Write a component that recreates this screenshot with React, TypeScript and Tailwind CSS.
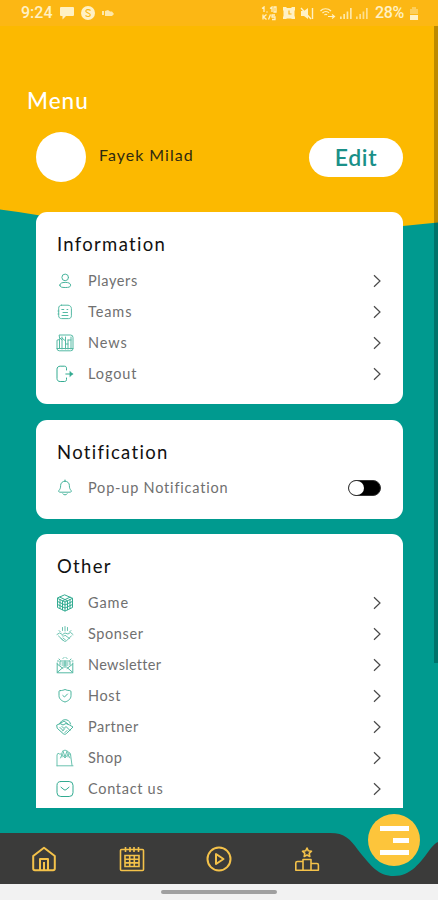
import React from 'react';

interface MenuItem {
    label: string;
    icon: React.ReactNode;
    tracking?: string;
}

interface IconProps {
    children: React.ReactNode;
    opacity?: string;
}

// Thin line icon used in the menu rows (18x18 grid)
const LineIcon: React.FC<IconProps> = ({ children, opacity = 'opacity-80' }) => (
    <svg
        viewBox="0 0 18 18"
        className={`w-[18px] h-[18px] shrink-0 text-[#1da386] ${opacity}`}
        fill="none"
        stroke="currentColor"
        strokeWidth="1"
        strokeLinecap="round"
        strokeLinejoin="round"
    >
        {children}
    </svg>
);

const informationItems: MenuItem[] = [
    {
        label: 'Players',
        tracking: 'tracking-[0.6px]',
        icon: (
            <LineIcon>
                <circle cx="9.2" cy="5.4" r="3.3" />
                <path d="M3.800 13.2c0-2 2.2-2.800 5.400-2.800s5.400.8 5.400 2.800-2.200 2.300-5.400 2.300-5.400-.3-5.400-2.300Z" />
            </LineIcon>
        ),
    },
    {
        label: 'Teams',
        icon: (
            <LineIcon opacity="opacity-75">
                <path d="M5.500 2.200h6.500c1.900 0 3.400 1.500 3.400 3.400v7.200c0 1.700-1 2.800-2.800 2.800h-7c-1.800 0-2.900-1-2.900-2.800V5.200c0-1.800 1-3 2.800-3Z" />
                <path d="M5.800 6.500h2M7 9.500h4.500M6 12.500h6M11 6.500h.8M2.800 8H2M2.800 11H2" />
            </LineIcon>
        ),
    },
    {
        label: 'News',
        icon: (
            <LineIcon opacity="opacity-75">
                <path d="M3.500 1h11a2.500 2.500 0 0 1 2.500 2.500v11a2.300 2.300 0 0 1-2.500 2.300H3.200A2.300 2.300 0 0 1 1 14.500V6.200l2.500-.7Z" />
                <path d="M3.500 5.500v9M6 3v12M6 4l3.500 3M9.500 3v12M12 6v9M9.500 10H12M12 6h3M15 3v12M3.500 3.500 6 6M1 14.500h16" />
            </LineIcon>
        ),
    },
    {
        label: 'Logout',
        icon: (
            <LineIcon opacity="opacity-90">
                <path d="M10.500 5V3.200c0-1.300-.8-2-2-2H4.200C2.200 1.200 1 2.400 1 4.200v9.300c0 1.900 1.200 3 3.200 3h4.300c1.200 0 2-.7 2-2V13" />
                <path d="M9.800 9h7" />
                <path d="M14 6.500 16.700 9 14 11.500Z" fill="currentColor" strokeWidth="0.500" />
            </LineIcon>
        ),
    },
];

const otherItems: MenuItem[] = [
    {
        label: 'Game',
        icon: (
            <LineIcon opacity="opacity-90">
                <path d="M9 1 16.500 4.300v9.200L9 17l-7.500-3.500V4.300Z" />
                <path d="M1.500 4.300 9 8l7.500-3.700M9 8v9M4 3.200l7.500 3.600v9M14 3.200 6.500 6.800v9M1.500 7.400 9 11l7.500-3.600M1.500 10.500 9 14l7.500-3.500M4 5.500v9M14 5.500v9" />
            </LineIcon>
        ),
    },
    {
        label: 'Sponser',
        tracking: 'tracking-[0.6px]',
        icon: (
            <LineIcon opacity="opacity-65">
                <path d="M1 9.500 3.500 8l3 1.500L9 8l3 1 2.500-1.500L17 9.500M2.500 11l5.500 5c.8.700 1.800.5 2.500-.2l5-5M6 10.500c1 1 2 .8 3-.3l4.500 3.300M7 13l2.500 2M5 13.500l2 2" />
                <path d="M9 1.500V6M6.500 2.500v3M11.500 2.500v3M3 5.500 4.500 7M15 5.500 13.500 7" />
            </LineIcon>
        ),
    },
    {
        label: 'Newsletter',
        tracking: 'tracking-[0.3px]',
        icon: (
            <LineIcon opacity="opacity-75">
                <path d="M1.200 7v9.800h15.600V7M1.200 8 7 12.500M16.800 8 11 12.500M1.200 16.500 7.500 11h3l6.300 5.500M4 9V5h10v4M6 7h6M6 9h6M9 5v5" />
                <path d="M3 3 4 4.200M15 3l-1 1.200M7 2.500l1-1M11 2.500l-1-1M1.500 5h1M16 5h1" />
            </LineIcon>
        ),
    },
    {
        label: 'Host',
        tracking: 'tracking-[0.6px]',
        icon: (
            <LineIcon>
                <path d="M4.200 3.600c2 0 3.400-.5 4.800-1.100 1.400.6 2.800 1.100 4.800 1.100.8 0 1.200.5 1.200 1.200v3.800c0 3.300-2.600 5.400-6 6.400-3.400-1-6-3.100-6-6.400V4.800c0-.7.4-1.200 1.200-1.200Z" />
                <path d="m6.800 8.500 1.700 1.500 3-3" />
            </LineIcon>
        ),
    },
    {
        label: 'Partner',
        tracking: 'tracking-[0.5px]',
        icon: (
            <LineIcon>
                <path d="M3.500 6C5 2.500 8 1 11 2c2 .7 3.200 2.200 3.500 4M1 7l3-1.500 3 1.500 3-1.500 3.500 1.500 3.500 2-3 3-3.500 3.500c-1 1-2.500 1-3.500 0L1.500 10.500Z" />
                <path d="m6 8.500 2 2 2-2 4 4M5 5l3-2 4 3M6.500 13l2-2M9 14.500l2-2M4 9.500l3 3" />
            </LineIcon>
        ),
    },
    {
        label: 'Shop',
        tracking: 'tracking-[0.6px]',
        icon: (
            <LineIcon opacity="opacity-65">
                <path d="M6 5H3.500L2 4.200 1 6v10.800M6 8V4.500C6 2.600 7.200 1.200 9 1.200s3 1.400 3 3.300V8M12 5h2.500L16 16.500M7 2l2 6 2-6M4.500 9 6 5.500 9 9l3-3.500L14 9M12 3c1.500 0 2.500 1 2.500 3" />
                <path d="M1 16.800h16" />
            </LineIcon>
        ),
    },
    {
        label: 'Contact us',
        tracking: 'tracking-[0.7px]',
        icon: (
            <LineIcon opacity="opacity-90">
                <rect x="1" y="1.500" width="16" height="15" rx="3.800" />
                <path d="m5 7.200 3 2.500c.7.500 1.300.5 2 0l3-2.500" />
            </LineIcon>
        ),
    },
];

const StatusBar: React.FC = () => (
    <div className="h-[26px] bg-[#fcb714] flex items-center justify-between pl-[21px] pr-[20px] text-[#fff1c4] font-['Roboto',sans-serif] font-medium text-[16px]">
        <div className="flex items-center">
            <span className="w-[32px]">9:24</span>
            <svg viewBox="0 0 14 14" className="w-[14px] h-[14px] ml-[7px]" fill="currentColor">
                <path d="M1 1h12a1 1 0 0 1 1 1v7a1 1 0 0 1-1 1H6l-3.500 3.500V10H1a1 1 0 0 1-1-1V2a1 1 0 0 1 1-1Z" />
            </svg>
            <svg viewBox="0 0 14 14" className="w-[14px] h-[14px] ml-[7px]">
                <circle cx="7" cy="7" r="7" fill="currentColor" />
                <path d="M9.500 4.500C8 3 4.500 3.500 4.800 5.300S9.500 7 9.300 8.900 6 11 4.500 9.500" fill="none" stroke="#fcb714" strokeWidth="1.100" />
            </svg>
            <svg viewBox="0 0 12 8" className="w-[12px] h-[8px] ml-[7px]" fill="currentColor" opacity="0.85">
                <path d="M0 2h2v4H0ZM3 2l3-1 2 1.500h2L12 5l-2 2H3Z" />
            </svg>
        </div>
        <div className="flex items-center">
            <svg viewBox="0 0 16 15" className="w-[16px] h-[15px]" fill="none" stroke="currentColor" strokeWidth="1.300">
                <path d="M1 2.500 3 1v5M5.500 6h1M9 2.500 11 1v5M13 1h2v5h-2ZM2 8.500v5M5.500 8.500 2.500 11l3 2.500M9.500 8.500l-2 5M14 9h-3v2h3v2.500h-3" />
            </svg>
            <svg viewBox="0 0 12 13" className="w-[12px] h-[13px] ml-[6px]">
                <path d="M0 0h3l1 1h4l1-1h3v3l-.5 1v5l.5 1v2h-3l-1-.5H4l-1 .5H0v-2l.5-1V4L0 3Z" fill="currentColor" />
                <path d="M6 3.500V7h2.500" fill="none" stroke="#fcb714" strokeWidth="1.200" />
            </svg>
            <svg viewBox="0 0 14 13" className="w-[14px] h-[13px] ml-[5px]" fill="currentColor">
                <path d="M1 4h3l4-3v11L4 9H1Z" />
                <path d="m1 1 10 11M12.500 1v11" stroke="currentColor" strokeWidth="1.400" />
            </svg>
            <svg viewBox="0 0 16 12" className="w-[16px] h-[12px] ml-[6px]" fill="none" stroke="currentColor" strokeWidth="1.200">
                <path d="M.5 4C3 1 8 1 11 4M2.500 6C4.500 4 7.500 4 9 6M4.500 8C5.500 7 6.500 7 7 8M8 9.500h6M12 7.500l2.500 2-2.500 2" />
            </svg>
            <svg viewBox="0 0 12 11" className="w-[12px] h-[11px] ml-[4px]" fill="currentColor" opacity="0.85">
                <path d="M0 8.500h1.700V11H0ZM3.300 6H5v5H3.300ZM6.600 3.500h1.700V11H6.600ZM10 0h1.700v11H10Z" />
            </svg>
            <svg viewBox="0 0 12 11" className="w-[12px] h-[11px] ml-[4px]" fill="currentColor" opacity="0.7">
                <path d="M0 8.500h1.700V11H0ZM3.300 6H5v5H3.300ZM6.600 3.500h1.700V11H6.600ZM10 0h1.700v11H10Z" />
            </svg>
            <span className="ml-[7px] w-[30px] tracking-[-0.400px]">28%</span>
            <svg viewBox="0 0 8 13" className="w-[8px] h-[13px] ml-[5px]" fill="currentColor">
                <path d="M2 0h4v2h2v5H0V2h2Z" opacity="0.4" />
                <path d="M0 8h8v5H0Z" />
            </svg>
        </div>
    </div>
);

const Chevron: React.FC = () => (
    <svg viewBox="0 0 8 14" className="w-[8px] h-[14px]" fill="none" stroke="#4a4a4a" strokeWidth="1.200">
        <path d="M1 1.200 7 7l-6 5.800" />
    </svg>
);

const Card: React.FC<{ title: string; className?: string; children: React.ReactNode }> = ({ title, className = '', children }) => (
    <section className={`bg-white rounded-[11px] pl-[20px] pr-[22px] pt-[18px] pb-[15px] ${className}`}>
        <h2 className="h-7 leading-7 mb-[7px] pl-[1px] text-[18.5px] tracking-[1.3px] text-[#111]">{title}</h2>
        {children}
    </section>
);

const Row: React.FC<{ item: MenuItem; children?: React.ReactNode }> = ({ item, children }) => (
    <div className="h-[31px] flex items-center">
        {item.icon}
        <span className={`ml-[14px] flex-1 text-[14.500px] text-[#707070] ${item.tracking ?? 'tracking-[0.9px]'}`}>{item.label}</span>
        {children ?? <Chevron />}
    </div>
);

const bellItem: MenuItem = {
    label: 'Pop-up Notification',
    tracking: 'tracking-[0.8px]',
    icon: (
        <LineIcon>
            <path d="M9 2.200c-2.800 0-4.400 2-4.400 4.500 0 2.200-.4 3.300-1.500 4.500-.9 1-.3 2 .8 2h10.200c1.100 0 1.700-1 .8-2-1.100-1.200-1.500-2.300-1.500-4.500 0-2.500-1.600-4.500-4.400-4.500Z" />
            <path d="M6.800 14.800c.5 1.500 3.900 1.500 4.400 0M9 1v1" />
        </LineIcon>
    ),
};

const BottomNav: React.FC = () => (
    <nav className="relative h-[51px] shrink-0">
        {/* Bar with the notch around the menu button */}
        <svg viewBox="0 0 438 51" className="absolute inset-0 w-full h-full" fill="#3b3b3a">
            <path d="M0 0H330C345 0 350 6 358 17C371 33 378 43 394 43C411 43 420 30 431 15C434 11.500 436 10 438 9V51H0Z" />
        </svg>
        <div className="relative flex items-center h-full pl-[31px] text-[#f4c24a]">
            <svg viewBox="0 0 26 26" className="w-[26px] h-[26px]" fill="none" stroke="currentColor" strokeWidth="2" strokeLinejoin="round">
                <path d="M2.200 10V22.500c0 1 .7 1.700 1.700 1.700h18.200c1 0 1.700-.7 1.700-1.700V10L13 1.800Z" />
                <path d="M9 24V13h8v11M13 16v8" />
            </svg>
            <svg viewBox="0 0 26 26" className="w-[26px] h-[26px] ml-[62px]" fill="none" stroke="currentColor" strokeWidth="1.600">
                <rect x="1.500" y="3.500" width="23" height="21" rx="1" />
                <path d="M6.500 1v5M11 1v5M15 1v5M19.500 1v5" />
                <path d="M6 9.500h14v11H6ZM6 13.200h14M6 16.900h14M10.700 9.500v11M15.300 9.500v11" />
            </svg>
            <svg viewBox="0 0 26 26" className="w-[26px] h-[26px] ml-[61px]" fill="none" stroke="currentColor" strokeWidth="2" strokeLinejoin="round">
                <circle cx="13" cy="13" r="11.500" />
                <path d="M10 8v10l7.500-5Z" />
            </svg>
            <svg viewBox="0 0 26 26" className="w-[26px] h-[26px] ml-[62px]" fill="none" stroke="currentColor" strokeWidth="1.600" strokeLinejoin="round">
                <path d="m13 2 1.300 2.800 3.200.4-2.300 2.200.6 3.100L13 9l-2.800 1.500.6-3.100-2.300-2.200 3.200-.4Z" />
                <path d="M9 24.300V13.500h8v10.800M9 15.500H3.500c-1 0-1.700.5-1.700 1.500v7.300h22.600V19c0-1-.5-1.500-1.500-1.500H17" />
            </svg>
        </div>
        <button className="absolute left-[368px] top-[-19px] w-[52px] h-[52px] rounded-full bg-[#fdc53b] flex flex-col items-end justify-center gap-[7px] pr-[11px]">
            <span className="w-[29px] h-[5px] bg-white" />
            <span className="w-[16px] h-[5px] bg-white" />
            <span className="w-[29px] h-[5px] bg-white" />
        </button>
    </nav>
);

export default function App() {
    return (
        <div className="relative w-[438px] h-[900px] flex flex-col overflow-hidden bg-[#009a8f] font-['Lato',sans-serif]">
            {/* Yellow backdrop */}
            <svg viewBox="0 0 438 230" className="absolute left-0 top-0 w-[438px] h-[230px]" fill="#fcb900">
                <path d="M0 0H438V222.500Q420 224 403 226Q210 244 37 215Q20 212 0 209.500Z" />
            </svg>

            <div className="relative flex-1 flex flex-col">
                <StatusBar />
                <h1 className="h-[30px] leading-[30px] mt-[60px] ml-[27px] text-[22.500px] tracking-[1px] font-medium text-white">Menu</h1>
                <div className="flex items-center mt-[15px] pl-[36px] pr-[35px] h-[52px]">
                    <div className="w-[50px] h-[50px] rounded-full bg-white" />
                    <span className="ml-[13px] flex-1 pb-[4px] text-[16px] tracking-[1px] text-[#2f2a10]">Fayek Milad</span>
                    <button className="w-[94px] h-[39px] rounded-full bg-white text-[23px] leading-[39px] tracking-[0.7px] font-semibold text-[#1a9088]">
                        Edit
                    </button>
                </div>

                <main className="mt-[29px] ml-[36px] mr-[35px] flex flex-col gap-[15.500px]">
                    <Card title="Information">
                        {informationItems.map((item) => (
                            <Row key={item.label} item={item} />
                        ))}
                    </Card>
                    <Card title="Notification">
                        <Row item={bellItem}>
                            <div className="w-[33px] h-[16px] rounded-full bg-black border border-[#333] flex items-center">
                                <div className="w-[15px] h-[14px] rounded-full bg-white" />
                            </div>
                        </Row>
                    </Card>
                    <Card title="Other" className="h-[274px] rounded-b-none overflow-hidden">
                        {otherItems.map((item) => (
                            <Row key={item.label} item={item} />
                        ))}
                    </Card>
                </main>
            </div>

            <BottomNav />

            {/* System gesture bar */}
            <div className="relative h-[16px] shrink-0 bg-[#f2f2f2] flex justify-center">
                <div className="mt-[6px] w-[116px] h-[4px] rounded-full bg-[#a0a0a0]" />
            </div>

            {/* Scroll thumb */}
            <div className="absolute right-0 top-[26px] w-[4px] h-[637px] bg-black/25" />
        </div>
    );
}
